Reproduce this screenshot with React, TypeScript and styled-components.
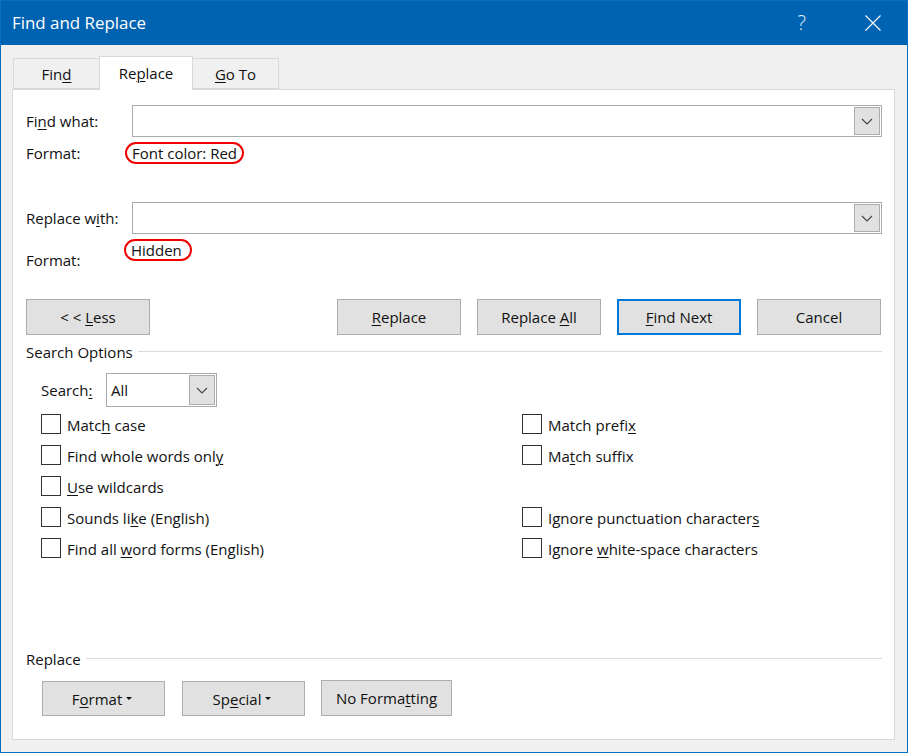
import React from 'react'
import styled, { createGlobalStyle } from 'styled-components'

const Global = createGlobalStyle`
  html, body {
    margin: 0;
    padding: 0;
    background: #f0f0f0;
  }
  * {
    box-sizing: border-box;
  }
  u {
    text-underline-offset: 2px;
    text-decoration-thickness: 1px;
  }
`

const Window = styled.div`
  width: 908px;
  height: 753px;
  display: flex;
  flex-direction: column;
  border: 1px solid #0a6fc2;
  background: #f0f0f0;
  color: #111;
  font-family: 'Open Sans', 'Liberation Sans', sans-serif;
  font-size: 15px;
  overflow: hidden;
`

const TitleBar = styled.header`
  height: 45px;
  flex: none;
  display: flex;
  align-items: center;
  margin: -1px -1px 0;
  padding: 0 27px 0 12px;
  background: #0063b1;
  color: #fff;
`

const Title = styled.h1`
  flex: 1;
  margin: 0;
  font-size: 16.9px;
  font-weight: 400;
`

const Help = styled.span`
  margin-right: 59px;
  font-size: 20px;
  font-weight: 300;
  color: #e3eef7;
`

const Tabs = styled.nav`
  display: flex;
  align-items: flex-end;
  height: 44px;
  flex: none;
  padding-left: 12px;
  position: relative;
  z-index: 1;
`

const Tab = styled.div<{ $active?: boolean; $width: number; $first?: boolean }>`
  width: ${p => p.$width}px;
  height: ${p => (p.$active ? 34 : 31)}px;
  margin-bottom: ${p => (p.$active ? -1 : 0)}px;
  margin-left: ${p => (p.$first ? 0 : -1)}px;
  padding-bottom: ${p => (p.$active ? 2 : 0)}px;
  display: flex;
  align-items: center;
  justify-content: center;
  background: ${p => (p.$active ? '#fff' : '#f0f0f0')};
  border: 1px solid #d9d9d9;
  border-bottom: ${p => (p.$active ? 'none' : '1px solid #d9d9d9')};
`

const Panel = styled.main`
  width: 883px;
  height: 651px;
  margin-left: 11px;
  padding: 15px 12px 0 13px;
  background: #fff;
  border: 1px solid #d9d9d9;
`

const FieldRow = styled.div`
  display: flex;
  align-items: center;
  height: 32px;
`

const FieldLabel = styled.label`
  width: 106px;
  flex: none;
`

const Combo = styled.div`
  flex: 1;
  height: 32px;
  display: flex;
  align-items: center;
  justify-content: flex-end;
  padding-right: 1px;
  border: 1px solid #ababab;
  background: #fff;
`

const DropButton = styled.div`
  width: 26px;
  height: 28px;
  display: flex;
  align-items: center;
  justify-content: center;
  background: #e1e1e1;
  border: 1px solid #adadad;
`

const FormatRow = styled.div<{ $labelDrop?: number; $height: number }>`
  display: flex;
  align-items: flex-start;
  height: ${p => p.$height}px;

  > label {
    margin-top: ${p => p.$labelDrop ?? 0}px;
  }
`

const Oval = styled.span<{ $shift: number; $top: number; $right: number }>`
  display: inline-block;
  height: 22px;
  line-height: 18px;
  margin: ${p => p.$top}px 0 0 ${p => p.$shift}px;
  padding: 0 ${p => p.$right}px 0 5px;
  border: 2px solid #f00000;
  border-radius: 11px;
  white-space: nowrap;
`

const ActionRow = styled.div`
  display: flex;
  align-items: center;
  height: 36px;
  gap: 16px;
  padding-right: 1px;
`

const Spacer = styled.div`
  flex: 1;
`

const Button = styled.button<{ $width?: number; $height?: number; $default?: boolean; $menu?: boolean }>`
  width: ${p => p.$width ?? 124}px;
  height: ${p => p.$height ?? 36}px;
  padding: 0 ${p => (p.$menu ? 3 : 0)}px 0 0;
  font: inherit;
  color: inherit;
  background: #e1e1e1;
  border: ${p => (p.$default ? '2px solid #0078d7' : '1px solid #adadad')};
  border-radius: 0;
`

const Caret = styled.span`
  display: inline-block;
  width: 0;
  height: 0;
  margin: 0 0 5px 4px;
  border-left: 3.5px solid transparent;
  border-right: 3.5px solid transparent;
  border-top: 3.5px solid #111;
`

const Legend = styled.div<{ $top: number }>`
  display: flex;
  align-items: center;
  gap: 5px;
  height: 20px;
  margin-top: ${p => p.$top}px;
  white-space: nowrap;

  &::after {
    content: '';
    flex: 1;
    height: 1px;
    margin-top: -2px;
    background: #dcdcdc;
  }
`

const SearchRow = styled.div`
  display: flex;
  align-items: center;
  height: 34px;
  margin: 11px 0 0 15px;
`

const SearchLabel = styled.label`
  width: 65px;
`

const SearchSelect = styled.div`
  width: 111px;
  height: 34px;
  display: flex;
  align-items: center;
  justify-content: space-between;
  padding: 0 1px 0 4px;
  border: 1px solid #ababab;

  ${DropButton} {
    height: 30px;
  }
`

const Options = styled.div`
  display: grid;
  grid-template-columns: 481px 1fr;
  grid-auto-rows: 31px;
  margin: 7px 0 0 15px;
  height: 155px;
`

const Option = styled.label`
  display: flex;
  align-items: center;
  height: 20px;
  gap: 6px;
  white-space: nowrap;

  > span:last-child {
    padding-top: 1px;
  }
`

const Box = styled.span`
  width: 20px;
  height: 20px;
  flex: none;
  background: #fff;
  border: 1px solid #333;
`

const FooterButtons = styled.div`
  display: flex;
  align-items: flex-end;
  height: 36px;
  margin: 11px 0 0 16px;

  > button:nth-child(2) {
    margin: 0 16px 0 17px;
  }
`

const Chevron = () => (
  <svg width="12" height="7" viewBox="0 0 12 7" fill="none">
    <path d="M1 1l5 5 5-5" stroke="#444" strokeWidth="1.1" />
  </svg>
)

const CloseIcon = () => (
  <svg width="16" height="16" viewBox="0 0 16 16" fill="none">
    <path d="M.5.5l15 15M15.5.5l-15 15" stroke="#fff" strokeWidth="1.1" />
  </svg>
)

const leftOptions = [
  <span>Matc<u>h</u> case</span>,
  <span>Find whole words onl<u>y</u></span>,
  <span><u>U</u>se wildcards</span>,
  <span>Sounds li<u>k</u>e (English)</span>,
  <span>Find all <u>w</u>ord forms (English)</span>,
]

const rightOptions = [
  <span>Match prefi<u>x</u></span>,
  <span>Ma<u>t</u>ch suffix</span>,
  null,
  <span>Ignore punctuation character<u>s</u></span>,
  <span>Ignore <u>w</u>hite-space characters</span>,
]

export default function App() {
  return (
    <Window>
      <Global />
      <TitleBar>
        <Title>Find and Replace</Title>
        <Help>?</Help>
        <CloseIcon />
      </TitleBar>
      <Tabs>
        <Tab $width={87} $first>Fin<u>d</u></Tab>
        <Tab $width={94} $active>Re<u>p</u>lace</Tab>
        <Tab $width={87}><u>G</u>o To</Tab>
      </Tabs>
      <Panel>
        <FieldRow>
          <FieldLabel>Fi<u>n</u>d what:</FieldLabel>
          <Combo><DropButton><Chevron /></DropButton></Combo>
        </FieldRow>
        <FormatRow $height={65} $labelDrop={6}>
          <FieldLabel>Format:</FieldLabel>
          <Oval $shift={-7} $top={5} $right={5}>Font color: Red</Oval>
        </FormatRow>
        <FieldRow>
          <FieldLabel>Replace w<u>i</u>th:</FieldLabel>
          <Combo><DropButton><Chevron /></DropButton></Combo>
        </FieldRow>
        <FormatRow $height={65} $labelDrop={16}>
          <FieldLabel>Format:</FieldLabel>
          <Oval $shift={-8} $top={5} $right={8}>Hidden</Oval>
        </FormatRow>
        <ActionRow>
          <Button><span>&lt; &lt; </span><u>L</u>ess</Button>
          <Spacer />
          <Button><u>R</u>eplace</Button>
          <Button>Replace <u>A</u>ll</Button>
          <Button $default><u>F</u>ind Next</Button>
          <Button>Cancel</Button>
        </ActionRow>
        <Legend $top={7}>Search Options</Legend>
        <SearchRow>
          <SearchLabel>Search<u>:</u></SearchLabel>
          <SearchSelect>
            All
            <DropButton><Chevron /></DropButton>
          </SearchSelect>
        </SearchRow>
        <Options>
          {leftOptions.map((text, i) => (
            <React.Fragment key={i}>
              <Option><Box />{text}</Option>
              {rightOptions[i] ? <Option><Box />{rightOptions[i]}</Option> : <div />}
            </React.Fragment>
          ))}
        </Options>
        <Legend $top={80}>Replace</Legend>
        <FooterButtons>
          <Button $width={123} $height={35} $menu>F<u>o</u>rmat<Caret /></Button>
          <Button $width={123} $height={35} $menu>Sp<u>e</u>cial<Caret /></Button>
          <Button $width={131}>No Forma<u>t</u>ting</Button>
        </FooterButtons>
      </Panel>
    </Window>
  )
}
